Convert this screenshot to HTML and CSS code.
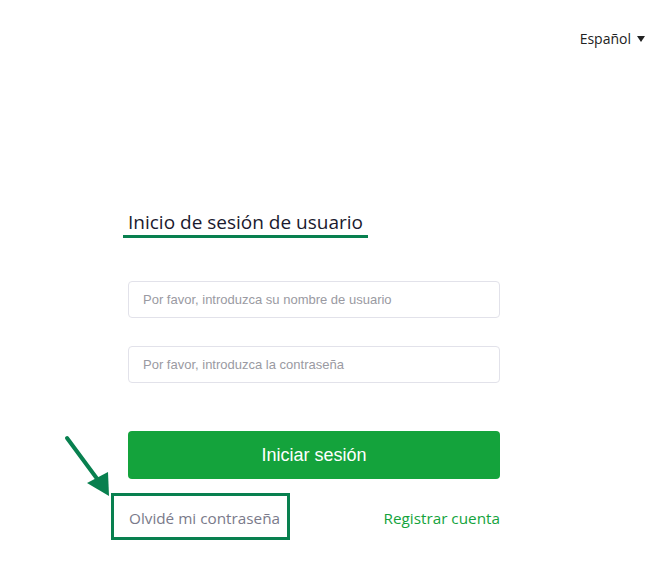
FILE: index.html
```html
<!DOCTYPE html>
<html lang="es">
<head>
<meta charset="utf-8">
<title>Inicio de sesión</title>
<link rel="stylesheet" href="styles.css">
</head>
<body>
<header class="topbar">
  <div class="lang">Español <span class="caret"></span></div>
</header>
<main class="login">
  <h1 class="title">Inicio de sesión de usuario</h1>
  <form class="form">
    <input class="field" type="text" placeholder="Por favor, introduzca su nombre de usuario">
    <input class="field" type="password" placeholder="Por favor, introduzca la contraseña">
    <button class="submit" type="button">Iniciar sesión</button>
    <div class="links">
      <a class="forgot" href="#">Olvidé mi contraseña</a>
      <a class="register" href="#">Registrar cuenta</a>
    </div>
  </form>
  <svg class="arrow" width="50" height="62" viewBox="0 0 50 62">
    <line x1="3" y1="3" x2="34" y2="45" stroke="#08804f" stroke-width="4" stroke-linecap="round"/>
    <polygon points="23,48 44,37 45,61" fill="#08804f"/>
  </svg>
</main>
</body>
</html>
```
FILE: styles.css
```css
* { box-sizing: border-box; }
html, body { margin: 0; padding: 0; background: #fff; }
body {
  width: 670px;
  height: 579px;
  font-family: "Open Sans", "Noto Sans", sans-serif;
  color: #333;
  position: relative;
  overflow: hidden;
}
.topbar {
  display: flex;
  justify-content: flex-end;
  padding: 17px 25px 0 0;
  height: 60px;
}
.lang {
  font-size: 14px;
  color: #222;
  display: flex;
  align-items: center;
  gap: 6px;
  line-height: 20px;
}
.caret {
  width: 0; height: 0;
  border-left: 4.5px solid transparent;
  border-right: 4.5px solid transparent;
  border-top: 6px solid #222;
}
.login {
  padding-left: 128px;
  width: 500px;
}
.title {
  margin: 149px 0 0 -5px;
  padding: 0 0 0 5px;
  display: inline-block;
  width: 245px;
  font-weight: 400;
  font-size: 19px;
  line-height: 26px;
  color: #1a1a2e;
  border-bottom: 3px solid #08804f;
}
.form {
  margin-top: 43px;
  display: flex;
  flex-direction: column;
}
.field {
  width: 372px;
  height: 37px;
  border: 1px solid #e2e2ea;
  border-radius: 4px;
  padding: 0 14px;
  font-family: "Liberation Sans", Arial, sans-serif;
  font-size: 13px;
  outline: none;
  margin-bottom: 28px;
}
.field::placeholder { color: #9a9aa2; }
.submit {
  margin-top: 20px;
  width: 372px;
  height: 48px;
  border: none;
  border-radius: 4px;
  background: #14a33c;
  color: #fff;
  font-family: "Liberation Sans", Arial, sans-serif;
  font-size: 18px;
}
.links {
  margin-top: 14px;
  width: 372px;
  display: flex;
  justify-content: space-between;
  align-items: baseline;
  font-size: 15.3px;
  line-height: 20px;
}
.links a { text-decoration: none; }
.forgot {
  color: #7a7a8a;
  margin-left: -17px;
  padding: 12px 7px 9px 15px;
  border: 3px solid #08804f;
}
.register { color: #14a33c; }
.arrow {
  position: absolute;
  left: 64px;
  top: 435px;
}
```
